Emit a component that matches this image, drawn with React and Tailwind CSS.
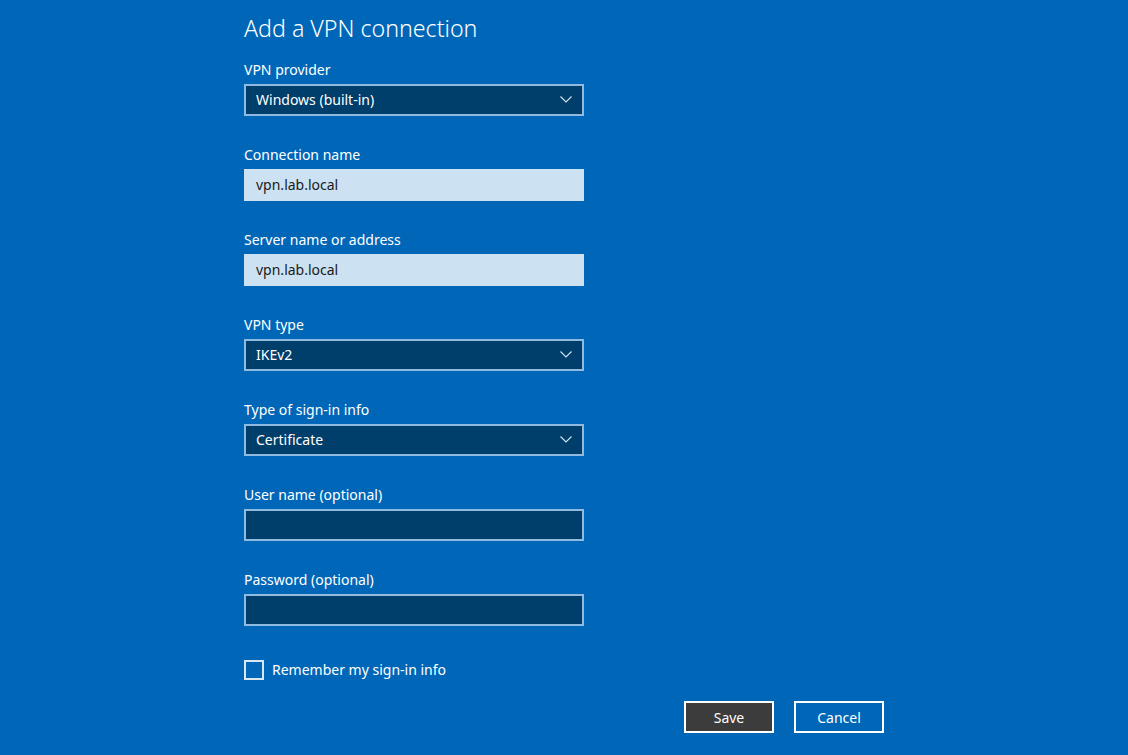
import React, { useState } from 'react';

const Chevron = () => (
    <svg width="12" height="7" viewBox="0 0 12 7" fill="none" className="shrink-0">
        <path d="M0.5 0.5 L6 6 L11.5 0.5" stroke="#d5e6f4" strokeWidth="1.1" />
    </svg>
);

const Label = ({ children }) => (
    <div className="h-5 pt-px text-[14px] leading-5 text-white">{children}</div>
);

const SelectBox = ({ value }) => (
    <div className="mt-[5px] flex h-8 w-[340px] items-center justify-between border-2 border-[#8fbbe0] bg-[#003e6b] pb-[2px] pl-[10px] pr-[10px] text-[14px] text-white">
        <span>{value}</span>
        <Chevron />
    </div>
);

const FilledInput = ({ value }) => (
    <div className="mt-[5px] flex h-8 w-[340px] items-center bg-[#cce1f1] pb-[2px] pl-3 text-[14px] text-[#1a1a1a]">
        {value}
    </div>
);

const EmptyInput = () => (
    <div className="mt-[5px] h-8 w-[340px] border-2 border-[#8fbbe0] bg-[#003e6b]" />
);

const App = () => {
    const [remember, setRemember] = useState(false);

    return (
        <div
            className="h-[755px] w-[1128px] overflow-hidden bg-[#0067b8] text-white"
            style={{ fontFamily: '"Noto Sans", "Open Sans", sans-serif' }}
        >
            <div className="ml-[244px] w-[640px] pt-[13px]">
                <h1 className="h-[30px] text-[23.2px] font-light leading-[30px]">Add a VPN connection</h1>

                <div className="mt-4">
                    <Label>VPN provider</Label>
                    <SelectBox value="Windows (built-in)" />
                </div>

                <div className="mt-7">
                    <Label>Connection name</Label>
                    <FilledInput value="vpn.lab.local" />
                </div>

                <div className="mt-7">
                    <Label>Server name or address</Label>
                    <FilledInput value="vpn.lab.local" />
                </div>

                <div className="mt-7">
                    <Label>VPN type</Label>
                    <SelectBox value="IKEv2" />
                </div>

                <div className="mt-7">
                    <Label>Type of sign-in info</Label>
                    <SelectBox value="Certificate" />
                </div>

                <div className="mt-7">
                    <Label>User name (optional)</Label>
                    <EmptyInput />
                </div>

                <div className="mt-7">
                    <Label>Password (optional)</Label>
                    <EmptyInput />
                </div>

                <label className="mt-[34px] flex cursor-pointer items-center gap-2 text-[14px]">
                    <span
                        onClick={() => setRemember(!remember)}
                        className="h-5 w-5 border-2 border-[#d7e7f4]"
                    />
                    <span className="-mt-[1px]">Remember my sign-in info</span>
                </label>

                <div className="mt-[21px] flex justify-end gap-[20px]">
                    <button className="h-8 w-[90px] border-2 border-white bg-[#3c3c3c] text-[14px] text-white">
                        Save
                    </button>
                    <button className="h-8 w-[90px] border-2 border-white bg-transparent text-[14px] text-white">
                        Cancel
                    </button>
                </div>
            </div>
        </div>
    );
};

export default App;
